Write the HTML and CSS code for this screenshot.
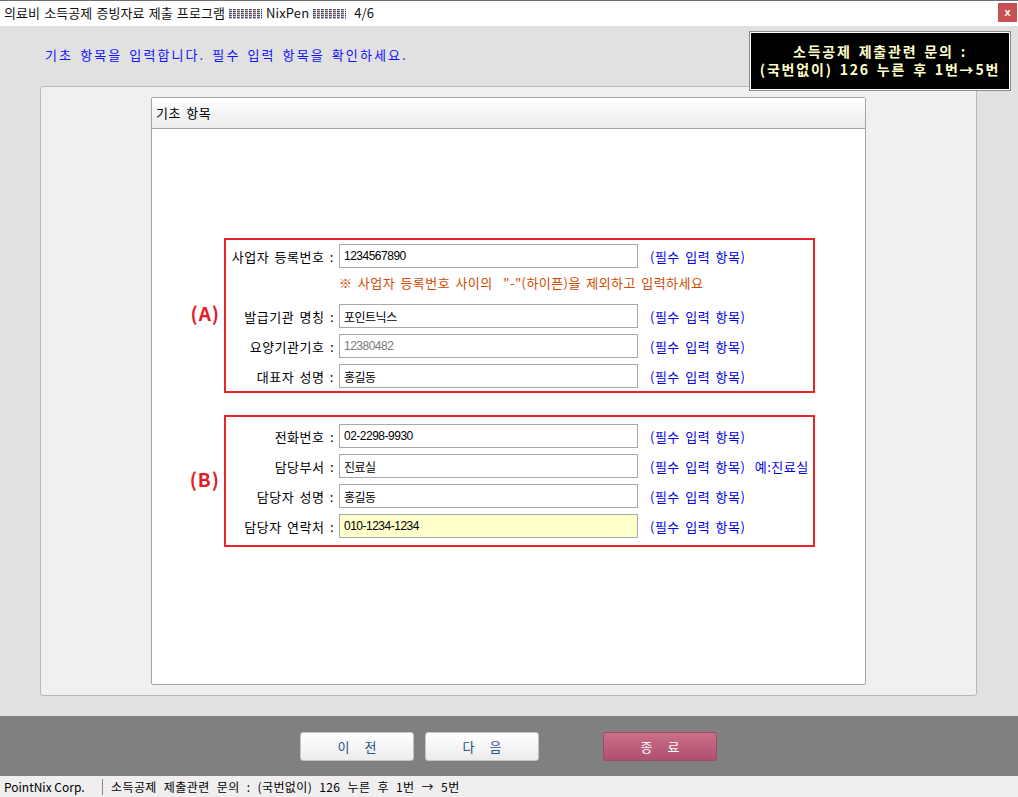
FILE: index.html
```html
<!DOCTYPE html>
<html>
<head>
  <meta charset="UTF-8">
  <link rel="stylesheet" href="styles.css">
</head>
<body>
  <div class="window">
    <div class="titlebar">
      <span class="title">의료비 소득공제 증빙자료 제출 프로그램 <span class="noise"></span> NixPen <span class="noise"></span>&nbsp; 4/6</span>
      <button class="close-btn">x</button>
    </div>

    <div class="main">
      <div class="guide">기초 항목을 입력합니다. 필수 입력 항목을 확인하세요.</div>
      <div class="notice">소득공제 제출관련 문의 :<br>(국번없이) 126 누른 후 1번→5번</div>

      <div class="panel">
        <div class="form-box">
          <div class="form-head">기초 항목</div>
          <div class="form-body">

            <div class="group-row">
              <div class="tag">(A)</div>
              <div class="group group-a">
                <div class="row">
                  <label>사업자 등록번호 :</label>
                  <input type="text" value="1234567890">
                  <span class="req">(필수 입력 항목)</span>
                </div>
                <div class="hint">※ 사업자 등록번호 사이의 &nbsp;"-"(하이픈)을 제외하고 입력하세요</div>
                <div class="row">
                  <label>발급기관 명칭 :</label>
                  <input type="text" value="포인트닉스">
                  <span class="req">(필수 입력 항목)</span>
                </div>
                <div class="row">
                  <label>요양기관기호 :</label>
                  <input type="text" class="readonly" value="12380482" readonly>
                  <span class="req">(필수 입력 항목)</span>
                </div>
                <div class="row">
                  <label>대표자 성명 :</label>
                  <input type="text" value="홍길동">
                  <span class="req">(필수 입력 항목)</span>
                </div>
              </div>
            </div>

            <div class="group-row group-row-b">
              <div class="tag">(B)</div>
              <div class="group group-b">
                <div class="row">
                  <label>전화번호 :</label>
                  <input type="text" value="02-2298-9930">
                  <span class="req">(필수 입력 항목)</span>
                </div>
                <div class="row">
                  <label>담당부서 :</label>
                  <input type="text" value="진료실">
                  <span class="req">(필수 입력 항목) <span class="example">예:진료실</span></span>
                </div>
                <div class="row">
                  <label>담당자 성명 :</label>
                  <input type="text" value="홍길동">
                  <span class="req">(필수 입력 항목)</span>
                </div>
                <div class="row">
                  <label>담당자 연락처 :</label>
                  <input type="text" class="focused" value="010-1234-1234">
                  <span class="req">(필수 입력 항목)</span>
                </div>
              </div>
            </div>

          </div>
        </div>
      </div>
    </div>

    <div class="bottombar">
      <button class="btn">이 전</button>
      <button class="btn">다 음</button>
      <button class="btn btn-exit">종 료</button>
    </div>

    <div class="statusbar">
      <span class="corp">PointNix Corp.</span>
      <span class="status-msg">소득공제 제출관련 문의 : (국번없이) 126 누른 후 1번 → 5번</span>
    </div>
  </div>
</body>
</html>
```

FILE: styles.css
```css
body {
  margin: 0;
  width: 1018px;
  height: 797px;
  overflow: hidden;
  font-family: "Noto Sans CJK KR", sans-serif;
  font-size: 13px;
  background: #e1e1e1;
}
.window {
  display: flex;
  flex-direction: column;
  height: 797px;
}
.titlebar {
  height: 25px;
  border-top: 1px solid #6f6f6f;
  background: #fff;
  display: flex;
  justify-content: space-between;
  align-items: flex-start;
  padding: 0 1px 0 4px;
}
.title {
  line-height: 24px;
  font-size: 13px;
  color: #111;
  white-space: nowrap;
  letter-spacing: 0.1px;
  word-spacing: 1px;
}
.noise {
  display: inline-block;
  width: 33px;
  height: 10px;
  vertical-align: -1px;
  background:
    repeating-linear-gradient(0deg, rgba(255,255,255,0.6) 0 1px, transparent 1px 2px),
    repeating-linear-gradient(90deg, #2a3fb8 0 1px, #b8304a 1px 2px, #3a8f3a 2px 3px, #ffffff 3px 4px);
}
.close-btn {
  margin-top: 2px;
  width: 19px;
  height: 19px;
  padding: 0;
  border: none;
  background: #c75050;
  color: #fff;
  font-family: "Liberation Sans", sans-serif;
  font-size: 11px;
  font-weight: bold;
  line-height: 19px;
}
.main {
  flex: 1;
  position: relative;
  display: flex;
  flex-direction: column;
  padding: 0 41px 20px 40px;
  min-height: 0;
}
.guide {
  height: 60px;
  box-sizing: border-box;
  padding: 20px 0 0 5px;
  line-height: 18px;
  color: #1010ff;
  letter-spacing: 2.1px;
  word-spacing: 2px;
}
.notice {
  position: absolute;
  top: 5px;
  right: 7px;
  width: 262px;
  height: 60px;
  box-sizing: border-box;
  padding-top: 10px;
  border: 1px solid #8c8c8c;
  box-shadow: inset 0 0 0 1px #fff;
  background: #000;
  color: #ffffc8;
  text-align: center;
  font-size: 14px;
  font-weight: bold;
  line-height: 18px;
  letter-spacing: 1.8px;
  word-spacing: 2px;
  z-index: 2;
}
.panel {
  flex: 1;
  display: flex;
  background: #f0f0f0;
  border: 1px solid #b9b9b9;
  border-radius: 3px;
  padding: 10px 110px;
  min-height: 0;
}
.form-box {
  flex: 1;
  display: flex;
  flex-direction: column;
  background: #fff;
  border: 1px solid #a5a5a5;
  border-radius: 2px;
}
.form-head {
  height: 30px;
  line-height: 30px;
  padding-left: 4px;
  border-bottom: 1px solid #a5a5a5;
  background: linear-gradient(#ffffff, #ebebeb);
  color: #000;
  letter-spacing: 0.5px;
  word-spacing: 2px;
}
.form-body {
  padding-top: 109px;
}
.group-row {
  display: flex;
}
.group-row-b {
  margin-top: 22px;
}
.tag {
  width: 72px;
  box-sizing: border-box;
  padding-right: 4px;
  text-align: right;
  align-self: center;
  color: #e0202a;
  font-size: 19px;
  font-weight: bold;
  letter-spacing: 1px;
  margin-top: -6px;
}
.group {
  width: 591px;
  box-sizing: border-box;
  border: 2px solid #e8232b;
}
.group-a {
  padding: 4px 0 3px;
}
.group-b {
  padding: 7px 0 7px;
}
.row {
  display: flex;
  align-items: center;
  height: 24px;
}
.row + .row,
.hint + .row {
  margin-top: 6px;
}
.row label {
  width: 109px;
  flex-shrink: 0;
  box-sizing: border-box;
  padding-right: 1px;
  text-align: right;
  white-space: nowrap;
  color: #000;
  letter-spacing: 0.5px;
  word-spacing: 2px;
}
.row input {
  margin: 0 0 0 4px;
  width: 299px;
  height: 24px;
  box-sizing: border-box;
  border: 1px solid #a9a9a9;
  padding: 0 4px;
  font-family: "Liberation Sans", "Noto Sans CJK KR", sans-serif;
  font-size: 12px;
  letter-spacing: -0.5px;
  color: #000;
  background: #fff;
  outline: none;
}
.row input.readonly {
  color: #7a7a7a;
}
.row input.focused {
  background: #ffffcc;
}
.req {
  margin-left: 12px;
  color: #0000e6;
  white-space: nowrap;
  letter-spacing: 0.5px;
  word-spacing: 2px;
}
.example {
  margin-left: 4px;
}
.hint {
  height: 24px;
  margin-top: 6px;
  line-height: 18px;
  padding-left: 113px;
  color: #d04a00;
  white-space: nowrap;
  letter-spacing: 0.45px;
  word-spacing: 2px;
}
.bottombar {
  height: 60px;
  box-sizing: border-box;
  background: #808080;
  display: flex;
  align-items: flex-start;
  padding: 16px 0 0 300px;
}
.btn {
  width: 114px;
  height: 29px;
  margin: 0;
  padding: 0;
  border: 1px solid #c4c4c4;
  border-radius: 3px;
  background: linear-gradient(#ffffff, #ececec);
  color: #27508c;
  font-family: "Noto Sans CJK KR", sans-serif;
  font-size: 13px;
  word-spacing: 12px;
}
.btn + .btn {
  margin-left: 11px;
}
.btn.btn-exit {
  margin-left: 64px;
  border-color: #a24766;
  background: linear-gradient(#cc6f88, #ad5070);
  color: #fff;
}
.statusbar {
  height: 21px;
  display: flex;
  align-items: center;
  background: #f0eeee;
  font-size: 12px;
  color: #000;
}
.corp {
  width: 103px;
  box-sizing: border-box;
  padding-left: 4px;
  height: 16px;
  line-height: 16px;
  border-right: 1px solid #888;
}
.status-msg {
  padding-left: 8px;
  word-spacing: 4px;
  letter-spacing: 0.4px;
}
```
